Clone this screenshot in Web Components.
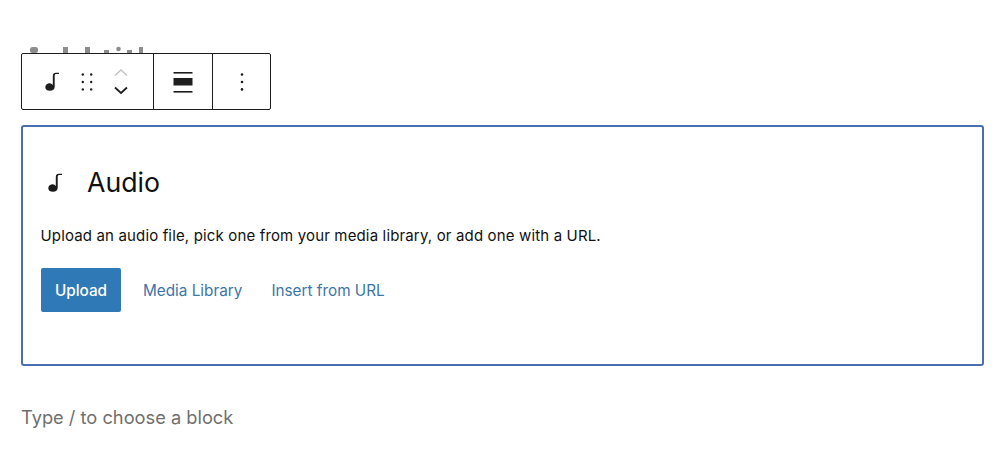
<!DOCTYPE html>
<html><head><meta charset="utf-8"><style>
html,body{margin:0;background:#fff}
body{width:1000px;height:457px;overflow:hidden;font-family:Inter,"Liberation Sans",sans-serif;color:#1a1a1a}
</style></head><body>
<wp-editor>
<wp-toolbar></wp-toolbar>
<wp-audio-block></wp-audio-block>
<wp-appender>Type / to choose a block</wp-appender>
</wp-editor>
<script>
const NOTE='<path d="M7.800 13.200V4.200C7.800 1.600 9 .8 11 .8h3v1.300h-2.400c-1.400 0-1.900.6-1.900 2v10.600c0 2.500-1.900 4.100-4.700 4.100C2.200 18.800 .3 17.500 .3 15.200c0-2.400 2.200-3.900 4.500-3.900 1.200 0 2.200.7 3 1.900z" fill="currentColor"/>';
function def(name,html){customElements.define(name,class extends HTMLElement{constructor(){super();this.attachShadow({mode:'open'}).innerHTML=html}})}
def('wp-editor',`<style>:host{display:flex;flex-direction:column;padding:45px 16px 0 21px;width:1000px;box-sizing:border-box}</style><slot></slot>`);
def('wp-toolbar',`<style>
:host{display:block;position:relative;padding-top:8px}
.bits{position:absolute;left:0;top:0;width:130px;height:8px;color:#8d8d8d}
.bar{display:flex;width:250px;height:57px;box-sizing:border-box;border:1px solid #1e1e1e;border-radius:2px;background:#fff}
.g{display:flex;align-items:center;border-right:1px solid #1e1e1e;box-sizing:border-box}
.g:last-child{border:0}
.a{width:132px;padding-left:23px}.b{width:59px;justify-content:center}.c{flex:1;justify-content:center}
svg{display:block}
.note{width:14px;height:19px;color:#1e1e1e}
.m{width:24px;height:24px;color:#1e1e1e}
.drag{margin-left:16px}
.arrows{display:flex;flex-direction:column;gap:9px;margin-left:14px}
</style>
<svg class="bits" viewBox="0 0 130 8" fill="currentColor"><rect x="9" y="2" width="8" height="6" rx="2.500"/><rect x="42" y="2" width="5" height="6"/><rect x="64" y="2" width="5" height="6"/><rect x="83" y="5" width="5" height="3"/><circle cx="97.500" cy="4" r="2.300"/><rect x="106" y="5" width="5" height="3"/><rect x="118" y="2" width="4" height="6"/></svg>
<div class="bar">
<div class="g a"><svg class="note" viewBox="0 0 14 19">${NOTE}</svg>
<svg class="m drag" viewBox="0 0 24 24" fill="#1e1e1e"><circle cx="7.800" cy="4.500" r="1.200"/><circle cx="16.200" cy="4.500" r="1.200"/><circle cx="7.800" cy="12" r="1.200"/><circle cx="16.200" cy="12" r="1.200"/><circle cx="7.800" cy="19.400" r="1.200"/><circle cx="16.200" cy="19.400" r="1.200"/></svg>
<div class="arrows"><svg width="16" height="9" viewBox="0 0 16 9" fill="none" stroke="#c4c4c4" stroke-width="1.500"><path d="M2 7.500 8 2l6 5.500"/></svg><svg width="16" height="9" viewBox="0 0 16 9" fill="none" stroke="#1e1e1e" stroke-width="1.800"><path d="M2 1.500 8 7l6-5.500"/></svg></div></div>
<div class="g b"><svg class="m" viewBox="0 0 24 24" fill="#1e1e1e"><rect x="2.500" y="2" width="19" height="1.600"/><rect x="2.500" y="8" width="19" height="7.500"/><rect x="2.500" y="21" width="19" height="1.600"/></svg></div>
<div class="g c"><svg class="m" viewBox="0 0 24 24" fill="#1e1e1e"><circle cx="12" cy="4.500" r="1.300"/><circle cx="12" cy="12" r="1.300"/><circle cx="12" cy="19.400" r="1.300"/></svg></div>
</div>`);
def('wp-audio-block',`<style>
:host{display:block;margin-top:15px;height:241px;box-sizing:border-box;border:2px solid #4a6fb0;border-radius:3px;padding:31px 18px 0 18px;background:#fff}
.head{display:flex;align-items:center;height:48px;font-size:26.700px;line-height:48px;color:#111}
.head svg{width:14px;height:19px;margin-left:7px;margin-right:25px;color:#1a1a1a;display:block}
p{margin:20px 0 0 -.5px;font-size:15px;line-height:20px;color:#111;letter-spacing:.15px;white-space:nowrap}
.acts{display:flex;align-items:center;margin-top:22px;font-size:15.300px;white-space:nowrap}
.btn{width:80px;height:44px;background:#2f79b7;color:#fff;border-radius:2px;display:flex;align-items:center;justify-content:center;font-weight:500}
.l{color:#3c76a8}.l1{margin-left:22px}.l2{margin-left:29px}
</style>
<div class="head"><svg viewBox="0 0 14 19">${NOTE}</svg><span>Audio</span></div>
<p>Upload an audio file, pick one from your media library, or add one with a URL.</p>
<div class="acts"><span class="btn">Upload</span><span class="l l1">Media Library</span><span class="l l2">Insert from URL</span></div>`);
def('wp-appender',`<style>:host{display:block;margin-top:38px;font-size:18.250px;line-height:26px;color:#6f6f6f}</style><slot></slot>`);
</script>
</body></html>
